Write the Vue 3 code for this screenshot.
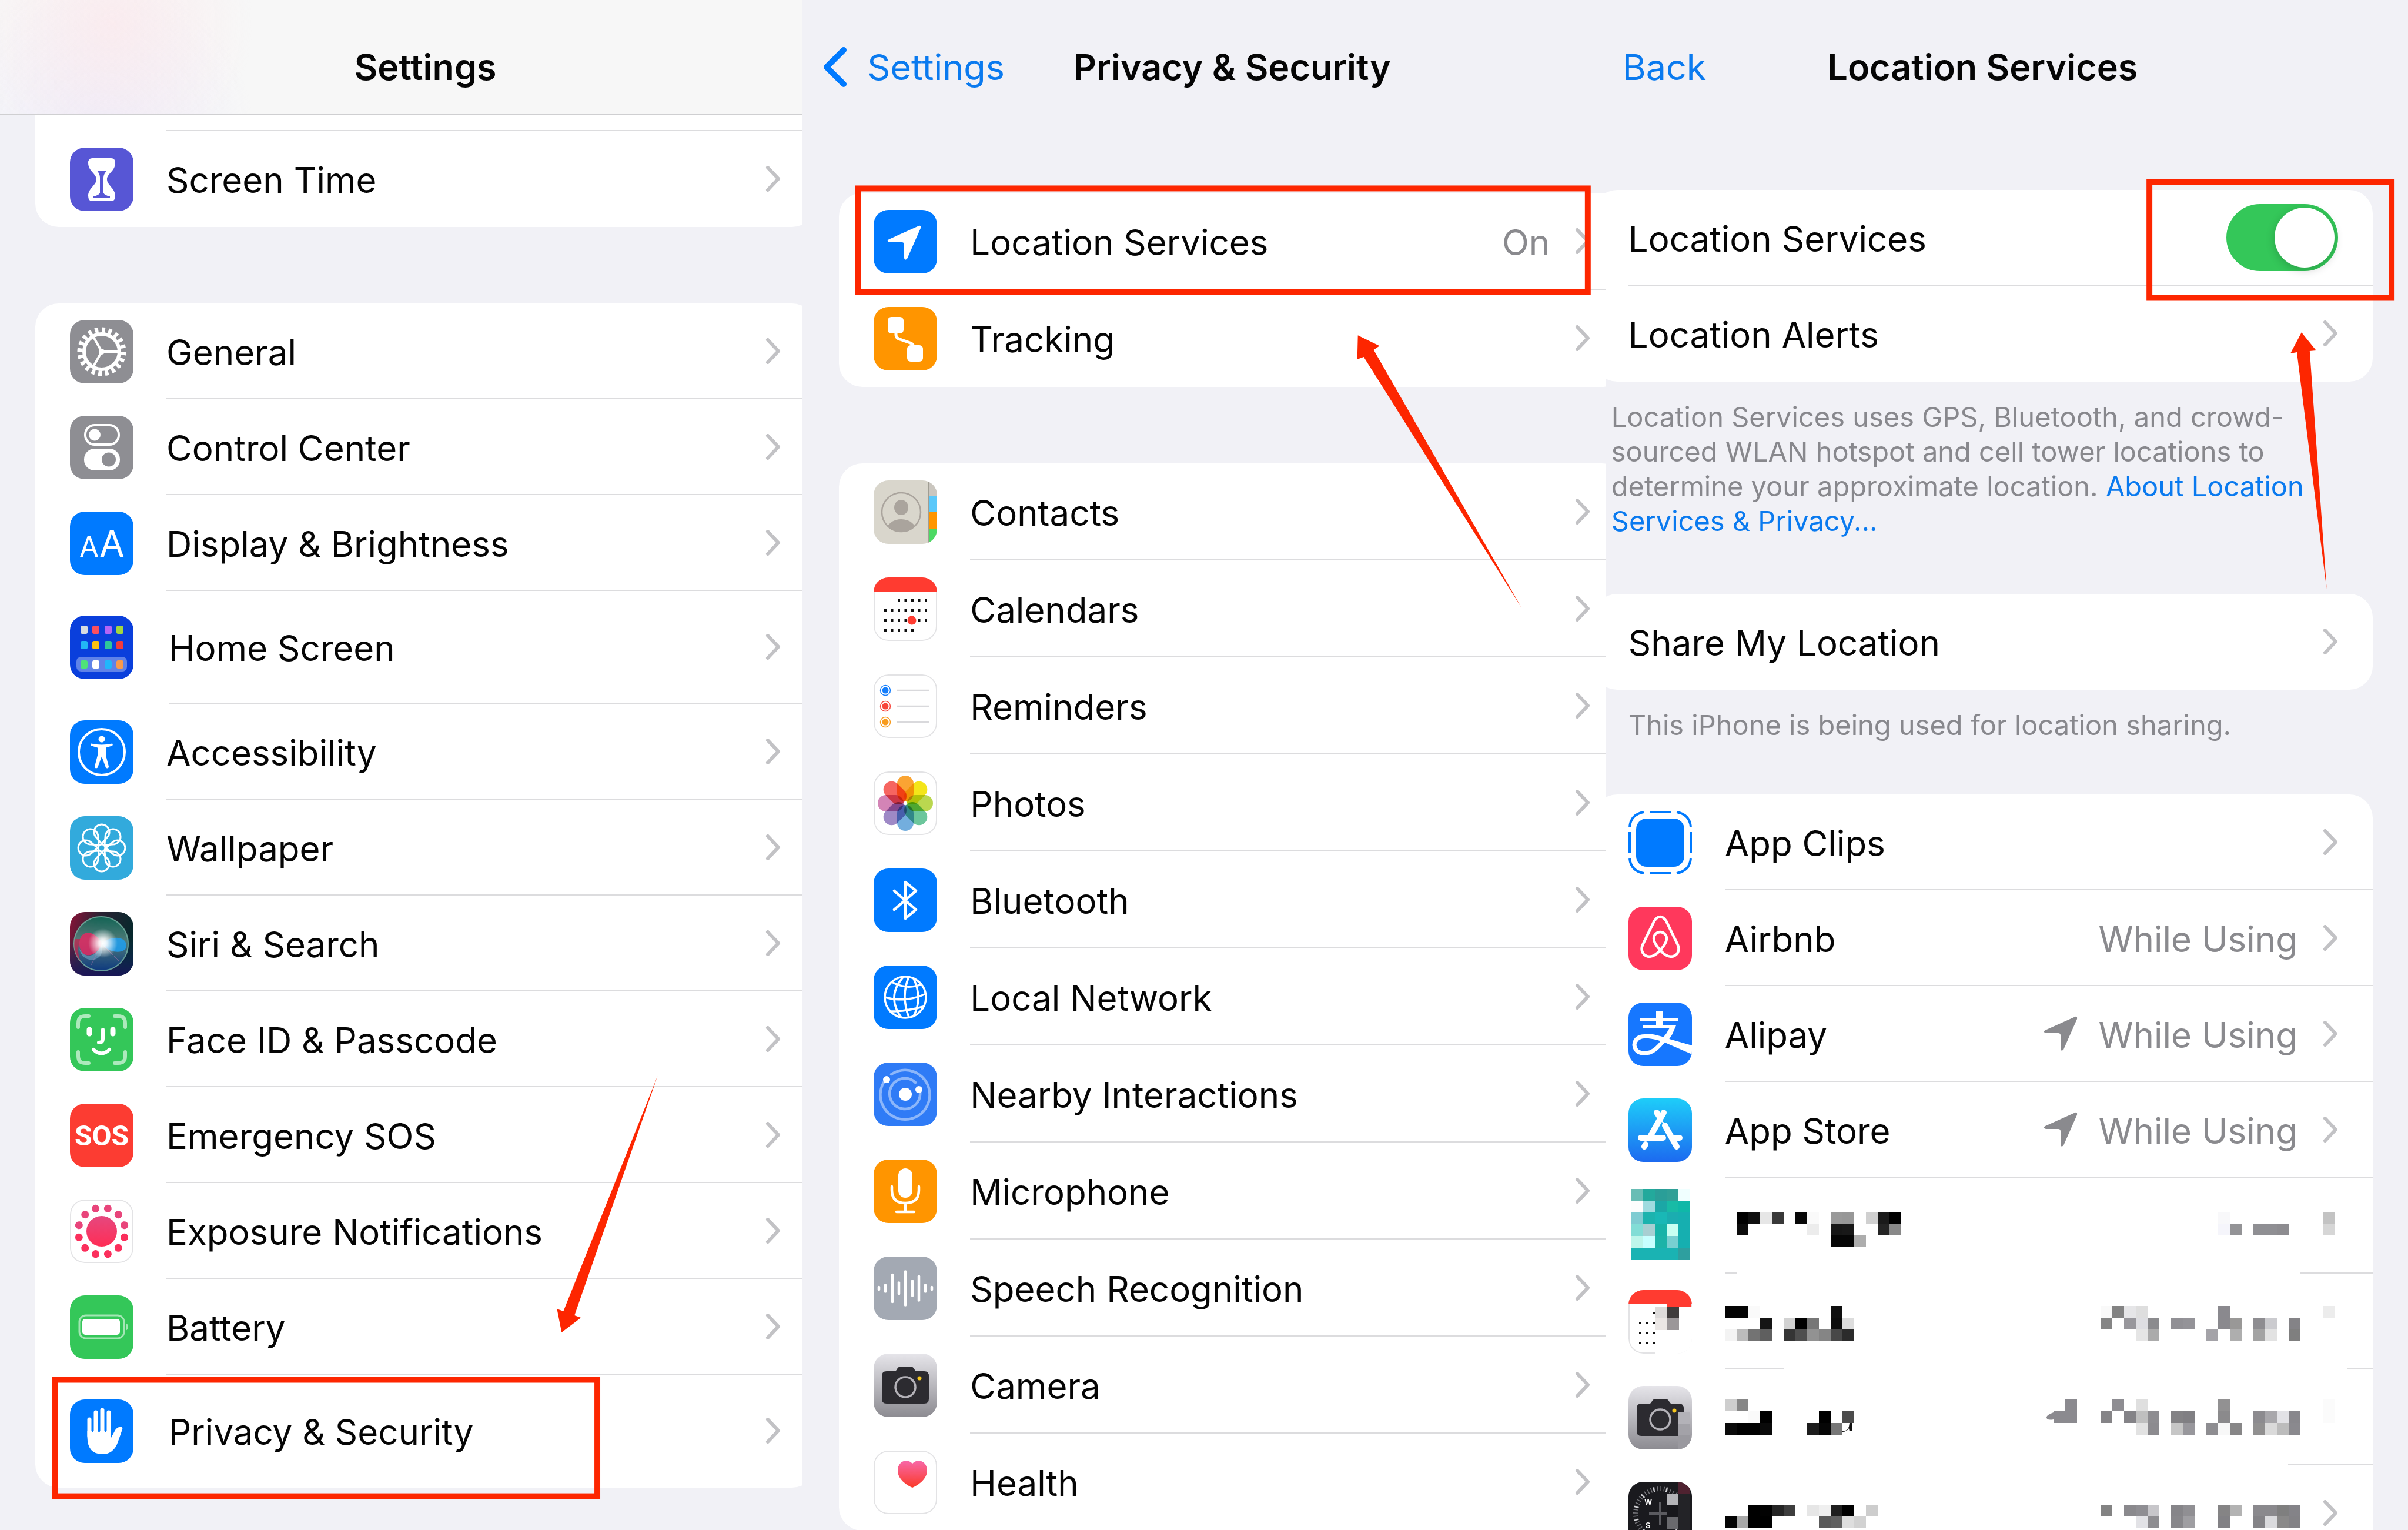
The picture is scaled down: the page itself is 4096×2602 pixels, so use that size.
<template>
  <main class="board">
    <section v-for="panel in panels" :key="panel.id" class="panel" :class="panel.id">
      <div class="screen">
        <header class="navbar">
          <div class="nav-side">
            <a v-if="panel.back" href="#" class="back">
              <svg v-if="panel.backIcon" class="back-icon" viewBox="0 0 43 70">
                <path d="M37 6 8 35l29 29" />
              </svg>
              <span>{{ panel.back }}</span>
            </a>
          </div>
          <h1>{{ panel.title }}</h1>
          <div class="nav-side"></div>
        </header>

        <template v-for="(block, i) in panel.blocks" :key="i">
          <p v-if="block.note" class="note" :class="block.kind">
            {{ block.note }} <a v-if="block.link" href="#">{{ block.link }}</a>
          </p>
          <ul v-else class="card" :class="block.kind">
            <li v-if="block.kind === 'cut'" class="row stub"><div class="body"></div></li>
            <li v-for="row in block.rows" :key="row.icon + row.label" class="row" :class="[row.kind, { plain: !row.icon }]">
              <svg v-if="row.icon" class="icon" :class="row.icon" viewBox="0 0 108 108" v-html="icons[row.icon]"></svg>
              <div class="body">
                <label v-if="row.toggle" class="label" for="location-switch">{{ row.label }}</label>
                <span v-else-if="row.label" class="label">{{ row.label }}</span>
                <svg v-if="row.blocks" class="blocks" viewBox="0 0 300 60">
                  <rect v-for="(c, n) in cells(row.blocks)" :key="n" :x="c.x" :y="c.y" width="20" height="20" :fill="c.fill" />
                  <path v-if="row.kind === 'line-b'" d="M200 54q9 0 11-8l1-6h4v14h-4l-1-5q-4 6-11 6z" fill="#111" />
                </svg>
                <span class="spacer"></span>
                <input v-if="row.toggle" id="location-switch" v-model="locationOn" type="checkbox" class="switch" />
                <svg v-if="row.arrow" class="arrow" viewBox="22 26 60 60">
                  <path :d="arrowShape" />
                </svg>
                <svg v-if="row.arrowBlocks" class="arrow-blocks" viewBox="0 0 52 60">
                  <path d="M12 20h20V0h20v40H12v-6q-12 2-12-4 1-4 12-8z" fill="#8b8a8f" />
                </svg>
                <span v-if="row.value" class="value">{{ row.value }}</span>
                <svg v-if="row.valueBlocks" class="value-blocks" viewBox="0 0 340 60">
                  <rect v-for="(c, n) in cells(row.valueBlocks)" :key="n" :x="c.x" :y="c.y" width="20" height="20" :fill="c.fill" />
                </svg>
                <svg v-if="row.endBlocks" class="end-blocks" viewBox="0 0 26 60">
                  <rect v-for="(c, n) in cells(row.endBlocks)" :key="n" :x="c.x" :y="c.y" width="20" height="20" :fill="c.fill" />
                </svg>
                <svg v-else-if="!row.toggle" class="chevron" viewBox="0 0 26 44">
                  <path d="M4 3l18 19L4 41" />
                </svg>
              </div>
            </li>
          </ul>
        </template>
      </div>
    </section>

    <!-- red boxes and pointers drawn over the three screens -->
    <svg class="marks" viewBox="0 0 4116 2615">
      <g class="boxes">
        <rect x="94" y="2358" width="927" height="199" />
        <rect x="1467" y="322" width="1247" height="177" />
        <rect x="3674" y="311" width="414" height="198" />
      </g>
      <g class="pointers">
        <path d="M1124 1839 963 2241l-11-4 8 40 33-25-11-4z" />
        <path d="M2601 1039 2331 610l-11 4 1-41 37 18-10 7z" />
        <path d="M3977 1007 3926 602l-11 2 19-36 25 31-11 1z" />
      </g>
    </svg>
  </main>
</template>

<script setup>
import { ref } from 'vue'

const locationOn = ref(true)

const arrowShape = 'M77 27 26 50q-5 3 1 5h21q4 0 4 4v23q1 5 5 1L80 31q1-5-3-4z'

// each entry is [row, column, colour] on a 20px grid
function cells(list) {
  return list.map(([r, c, fill]) => ({ x: c * 20, y: r * 20, fill }))
}

const panels = [
  {
    id: 'settings',
    title: 'Settings',
    blocks: [
      { kind: 'cut', rows: [{ icon: 'hourglass', label: 'Screen Time' }] },
      {
        rows: [
          { icon: 'gear', label: 'General' },
          { icon: 'control', label: 'Control Center' },
          { icon: 'display', label: 'Display & Brightness' },
          { icon: 'home', label: 'Home Screen', kind: 'tall' },
          { icon: 'access', label: 'Accessibility' },
          { icon: 'wallpaper', label: 'Wallpaper' },
          { icon: 'siri', label: 'Siri & Search' },
          { icon: 'faceid', label: 'Face ID & Passcode' },
          { icon: 'sos', label: 'Emergency SOS' },
          { icon: 'exposure', label: 'Exposure Notifications' },
          { icon: 'battery', label: 'Battery' },
          { icon: 'hand', label: 'Privacy & Security', kind: 'tall' }
        ]
      }
    ]
  },
  {
    id: 'privacy',
    title: 'Privacy & Security',
    back: 'Settings',
    backIcon: true,
    blocks: [
      {
        rows: [
          { icon: 'location', label: 'Location Services', value: 'On' },
          { icon: 'tracking', label: 'Tracking' }
        ]
      },
      {
        rows: [
          { icon: 'contacts', label: 'Contacts' },
          { icon: 'calendar', label: 'Calendars' },
          { icon: 'reminders', label: 'Reminders' },
          { icon: 'photos', label: 'Photos' },
          { icon: 'bluetooth', label: 'Bluetooth' },
          { icon: 'network', label: 'Local Network' },
          { icon: 'nearby', label: 'Nearby Interactions' },
          { icon: 'mic', label: 'Microphone' },
          { icon: 'speech', label: 'Speech Recognition' },
          { icon: 'camera', label: 'Camera' },
          { icon: 'health', label: 'Health' }
        ]
      }
    ]
  },
  {
    id: 'location-services',
    title: 'Location Services',
    back: 'Back',
    blocks: [
      {
        rows: [
          { label: 'Location Services', toggle: true },
          { label: 'Location Alerts' }
        ]
      },
      {
        kind: 'wide',
        note: 'Location Services uses GPS, Bluetooth, and crowd-sourced WLAN hotspot and cell tower locations to determine your approximate location.',
        link: 'About Location Services & Privacy...'
      },
      { rows: [{ label: 'Share My Location' }] },
      { kind: 'short', note: 'This iPhone is being used for location sharing.' },
      {
        rows: [
          { icon: 'clips', label: 'App Clips' },
          { icon: 'airbnb', label: 'Airbnb', value: 'While Using' },
          { icon: 'alipay', label: 'Alipay', value: 'While Using', arrow: true },
          { icon: 'appstore', label: 'App Store', value: 'While Using', arrow: true },
          {
            icon: 'teal',
            kind: 'line-a',
            blocks: [
              [0, 1, '#000'], [0, 2, '#0f0f0f'], [0, 3, '#e6e6e6'], [0, 4, '#383838'], [0, 6, '#080808'],
              [0, 7, '#fafafa'], [0, 9, '#999'], [0, 10, '#979797'], [0, 12, '#d0d0d0'], [0, 13, '#1a1a1a'], [0, 14, '#000'],
              [1, 1, '#0c0c0c'], [1, 7, '#ececec'], [1, 9, '#161616'], [1, 10, '#181818'], [1, 13, '#242424'], [1, 14, '#888'],
              [2, 9, '#060606'], [2, 10, '#060606'], [2, 11, '#adadad']
            ],
            valueBlocks: [
              [0, 10, '#f8f8fa'], [1, 10, '#f5f5fb'], [1, 11, '#939396'], [1, 13, '#8f8f93'], [1, 14, '#8f8f93'], [1, 15, '#8d8c90']
            ],
            endBlocks: [[0, 0, '#c3c3c3'], [1, 0, '#d6d6d6']]
          },
          {
            icon: 'calendarCut',
            kind: 'line-mid',
            blocks: [
              [0, 0, '#040404'], [0, 1, '#040404'], [0, 2, '#fafafa'], [0, 9, '#0f0f0f'],
              [1, 3, '#151515'], [1, 5, '#d2d2d2'], [1, 6, '#000'], [1, 7, '#777'], [1, 9, '#0c0c0c'], [1, 10, '#ddd'],
              [2, 0, '#f3f3f3'], [2, 1, '#bbb'], [2, 2, '#737373'], [2, 3, '#5f5f5f'], [2, 5, '#353535'], [2, 6, '#4f4f4f'],
              [2, 7, '#929292'], [2, 8, '#858585'], [2, 9, '#484848'], [2, 10, '#2b2b2b']
            ],
            valueBlocks: [
              [0, 0, '#f9f9f9'], [0, 1, '#838383'], [0, 2, '#e6e6e8'], [0, 3, '#dedede'], [0, 10, '#8a898e'],
              [1, 0, '#858585'], [1, 2, '#98979c'], [1, 3, '#dedee2'], [1, 4, '#8b8b8e'], [1, 6, '#919095'], [1, 7, '#949398'],
              [1, 10, '#8a898e'], [1, 11, '#999897'], [1, 13, '#8e8d91'], [1, 14, '#cbcbcf'], [1, 16, '#848387'],
              [2, 3, '#e5e5e5'], [2, 4, '#ababab'], [2, 9, '#a4a3a8'], [2, 11, '#aeaeae'], [2, 13, '#a3a3a3'], [2, 14, '#e2e2e2'], [2, 16, '#7f7f7f']
            ],
            endBlocks: [[0, 0, '#ececec']]
          },
          {
            icon: 'cameraCut',
            kind: 'line-b',
            arrowBlocks: true,
            blocks: [
              [0, 0, '#cecece'], [0, 1, '#878787'],
              [1, 2, '#fafafa'], [1, 3, '#000'], [1, 8, '#000'], [1, 10, '#4c4c4c'],
              [2, 0, '#0a0a0a'], [2, 1, '#000'], [2, 2, '#000'], [2, 3, '#0a0a0a'], [2, 7, '#1d1d1d'], [2, 8, '#060606'], [2, 9, '#777']
            ],
            valueBlocks: [
              [0, 1, '#8e8d92'], [0, 3, '#dfdfdf'], [0, 10, '#929192'],
              [1, 0, '#858487'], [1, 2, '#848387'], [1, 3, '#bfbfbf'], [1, 4, '#8e8d91'], [1, 6, '#838285'], [1, 7, '#807f83'],
              [1, 10, '#8b8a8c'], [1, 13, '#8c8b8f'], [1, 14, '#a8a7ab'], [1, 15, '#e2e2e6'], [1, 16, '#88878c'],
              [2, 3, '#e2e2e2'], [2, 4, '#8c8b8f'], [2, 6, '#c6c6c6'], [2, 7, '#98979c'], [2, 9, '#8e8d91'], [2, 10, '#f8f8f8'],
              [2, 11, '#878687'], [2, 13, '#919090'], [2, 14, '#dadada'], [2, 15, '#bcbcbc'], [2, 16, '#8a898e']
            ],
            endBlocks: [[0, 0, '#fbfbfb'], [1, 0, '#fbfbfb']]
          },
          {
            icon: 'compass',
            kind: 'low',
            blocks: [
              [0, 2, '#000'], [0, 3, '#020202'], [0, 4, '#252525'], [0, 5, '#3d3d3d'], [0, 7, '#e6e6e6'], [0, 8, '#efefef'],
              [0, 9, '#1e1e1e'], [0, 10, '#000'], [0, 12, '#cdcdcd'],
              [1, 0, '#040404'], [1, 1, '#a8a8a8'], [1, 2, '#000'], [1, 3, '#000'], [1, 8, '#5a5a5a'], [1, 9, '#606060'],
              [1, 10, '#dedede'], [1, 11, '#d2d2d2']
            ],
            valueBlocks: [
              [0, 0, '#838383'], [0, 2, '#8a898d'], [0, 3, '#8f8e93'], [0, 4, '#c7c6ca'], [0, 6, '#868589'], [0, 7, '#908f93'],
              [0, 10, '#858485'], [0, 11, '#b3b3b3'], [0, 13, '#8a898d'], [0, 14, '#8a898d'], [0, 15, '#7f7f7f'], [0, 16, '#848388'],
              [1, 3, '#e2e2e6'], [1, 4, '#8e8d91'], [1, 6, '#88878b'], [1, 7, '#9f9ea2'], [1, 10, '#828185'], [1, 13, '#848387'],
              [1, 14, '#dadadd'], [1, 15, '#8a8989'], [1, 16, '#838286']
            ]
          }
        ]
      }
    ]
  }
]

const around = (count, draw, start = 0) =>
  Array.from({ length: count }, (_, k) => draw(start + (k * 360) / count, k)).join('')

const bg = (fill) => `<rect width="108" height="108" fill="${fill}"/>`
const whiteBg = '<rect x="1" y="1" width="106" height="106" rx="24" fill="#fff" stroke="#e3e3e5" stroke-width="2"/>'
const line = (width, inner, extra = '') =>
  `<g fill="none" stroke="#fff" stroke-width="${width}" stroke-linecap="round" stroke-linejoin="round" ${extra}>${inner}</g>`

const squares = (colors, y) =>
  colors.map((c, k) => `<rect x="${[18, 38, 59, 79][k]}" y="${y}" width="12" height="14" rx="3" fill="${c}"/>`).join('')

const dotRow = (columns, y) =>
  columns.map((c) => `<rect x="${18 + c * 11.5}" y="${y - 2}" width="4" height="4" fill="#111"/>`).join('')

const tile = (x, y, fill, h = 20) => `<rect x="${x}" y="${y}" width="20" height="${h}" fill="${fill}"/>`

const petals = ['#fa9a1c', '#f3e200', '#b3d33c', '#5cc091', '#64a5db', '#937cc0', '#ce76ae', '#f5544f']
const bars = [[9, 4], [20, 11], [32, 46], [43, 19], [54, 57], [66, 25], [77, 41], [88, 11], [99, 4]]

const tealTiles = [
  ['#69bdb5', '#23a99c', '#2a9e98', '#30a097', '#f0ffff'],
  ['#fcfdfd', '#9edbdf', '#1ba7a6', '#18bba6', '#0fb8a8'],
  ['#7fccd2', '#1bb3ae', '#19b8b6', '#1badb0', '#16afb0'],
  ['#82ddd6', '#a8cfd2', '#18b3a8', '#c9fff2', '#16afb0'],
  ['#bdf5ea', '#c8ffff', '#1cb3a8', '#78cfd1', '#16afb0'],
  ['#1ab3b3', '#1ab3b3', '#1ab3b3', '#1ab3b3', '#2e9f9f']
]

const cameraArt = (id) =>
  `<defs><linearGradient id="${id}" x2="0" y2="1"><stop stop-color="#e6e5ea"/><stop offset="1" stop-color="#8c8b91"/></linearGradient></defs>` +
  bg(`url(#${id})`) +
  '<path d="M22 30h14q2 0 4-4 2-4 7-4h15q5 0 7 4 2 4 4 4h13q8 0 8 8v39q0 8-8 8H22q-8 0-8-8V38q0-8 8-8z" fill="#2c2b30"/>' +
  '<circle cx="54" cy="57" r="17" fill="#2c2b30" stroke="#b4b2b8" stroke-width="3.5"/>' +
  '<circle cx="78" cy="42" r="3.5" fill="#f7c81e"/>'

const icons = {
  hourglass:
    bg('#5756d5') +
    '<path d="M38 18h32q7 0 7 8c0 14-14 18-14 28s14 15 14 28q0 9-7 9H38q-7 0-7-9c0-13 14-18 14-28S31 40 31 26q0-8 7-8z" fill="#fff"/>' +
    '<path d="M46 39h17q-6 6-6 12v26q2 4 11 6v2H40v-2q9-2 11-6V51q0-6-5-12z" fill="#5756d5"/>',
  gear:
    bg('#8e8e93') +
    '<circle cx="54" cy="54" r="37" fill="none" stroke="#fff" stroke-width="9" pathLength="40" stroke-dasharray="1 1"/>' +
    '<circle cx="54" cy="54" r="30" fill="none" stroke="#fff" stroke-width="6"/>' +
    line(4, '<path d="M54 54h28M54 54 40 29M54 54 40 79"/>') +
    '<circle cx="54" cy="54" r="5" fill="#fff"/>',
  control:
    bg('#8e8e93') +
    '<rect x="26" y="16" width="57" height="33" rx="16" fill="none" stroke="#fff" stroke-width="4"/>' +
    '<circle cx="42" cy="32.5" r="10" fill="#fff"/>' +
    '<rect x="24" y="56" width="61" height="37" rx="18" fill="#fff"/><circle cx="66" cy="74.5" r="12" fill="#8e8e93"/>',
  display: bg('#007aff') + '<text x="16" y="77" class="glyph-a">A</text><text x="50" y="77" class="glyph-b">A</text>',
  home:
    bg('#0a3fdc') +
    squares(['#d8dbe0', '#fb4f60', '#b464f6', '#a4d63f'], 17) +
    squares(['#22b8f5', '#f9c012', '#2fc79a', '#f13b3c'], 43) +
    '<rect x="11" y="70" width="86" height="25" rx="8" fill="#fff" opacity=".35"/>' +
    squares(['#4fe27a', '#fff', '#20b6fb', '#f99a4c'], 76),
  access:
    bg('#007aff') +
    '<circle cx="54" cy="54" r="39" fill="none" stroke="#fff" stroke-width="4"/><circle cx="54" cy="32" r="5.5" fill="#fff"/>' +
    '<path d="M36 39.5q-2 3 1 4l10 3v13l-5 19q0 3 3 3l2-1 7-19 7 19 2 1q3 0 3-3l-5-19v-13l10-3q3-1 1-4-10 2-18 2t-18-2z" fill="#fff"/>',
  wallpaper:
    bg('#32aadc') +
    line(3, around(8, (a) => `<path d="M54 47 43 34a13 13 0 1 1 22 0z" transform="rotate(${a} 54 54)"/>`) + '<circle cx="54" cy="54" r="6"/>'),
  siri:
    '<defs><linearGradient id="siri-bg" x2="1" y2=".3"><stop stop-color="#8d1238"/><stop offset=".45" stop-color="#2a2233"/><stop offset="1" stop-color="#06282c"/></linearGradient>' +
    '<linearGradient id="siri-low" x2="0" y2="1"><stop offset=".4" stop-color="#083a6a" stop-opacity="0"/><stop offset="1" stop-color="#1b1260" stop-opacity=".8"/></linearGradient>' +
    '<linearGradient id="siri-orb" x2="0" y2="1"><stop stop-color="#0f6f5a"/><stop offset=".45" stop-color="#5c8a86"/><stop offset="1" stop-color="#0c3f86"/></linearGradient>' +
    '<radialGradient id="siri-glow"><stop stop-color="#fff"/><stop offset=".25" stop-color="#fff" stop-opacity=".9"/><stop offset="1" stop-color="#fff" stop-opacity="0"/></radialGradient></defs>' +
    bg('url(#siri-bg)') + bg('url(#siri-low)') +
    '<circle cx="53" cy="54" r="46" fill="url(#siri-orb)" opacity=".85"/><circle cx="53" cy="54" r="46" fill="none" stroke="#7bb8a8" stroke-width="2" opacity=".8"/>' +
    '<path d="M8 46a46 46 0 0 0 10 38q-8-20 0-38z" fill="#c81f4c" opacity=".7"/>' +
    '<path d="M54 54C44 30 16 28 16 54s28 26 38 0z" fill="#e22862" opacity=".85"/><path d="M54 54c8 34-34 36-38 8 10 20 30 14 38-8z" fill="#7db6d6" opacity=".5"/>' +
    '<path d="M54 54c14-14 40-14 42 2S66 72 54 54z" fill="#1f9ff0" opacity=".85"/>' +
    '<path d="M54 54 36 90M54 54l30 30" stroke="#b778b0" opacity=".5"/><circle cx="56" cy="53" r="25" fill="url(#siri-glow)"/>',
  faceid:
    bg('#34c759') +
    line(6, '<path d="M14 33v-7q0-12 12-12h6M76 14h6q12 0 12 12v7M94 75v7q0 12-12 12h-6M32 94h-6q-12 0-12-12v-7"/>', 'opacity=".6"') +
    line(9, '<path d="M33 37v7M73 37v7"/>') +
    line(6, '<path d="M56 37v16q0 6-7 6M40 71q14 13 27 0"/>'),
  sos: bg('#fc3c32') + '<text x="54" y="71" text-anchor="middle" class="glyph-sos">SOS</text>',
  exposure:
    whiteBg +
    '<defs><linearGradient id="expo" x2="0" y2="1"><stop stop-color="#e5487f"/><stop offset="1" stop-color="#ff2d55"/></linearGradient></defs>' +
    '<circle cx="54" cy="54" r="26" fill="url(#expo)"/>' +
    around(12, (a) => `<circle cx="54" cy="14" r="6.5" fill="${a > 90 && a < 270 ? '#fb2f5c' : '#e8457b'}" transform="rotate(${a} 54 54)"/>`, 15),
  battery:
    bg('#34c759') +
    '<rect x="16" y="34" width="76" height="39" rx="11" fill="none" stroke="#fff" stroke-width="3" opacity=".55"/>' +
    '<rect x="21" y="40" width="64" height="27" rx="5" fill="#fff"/><path d="M95 47q4 2 4 6.5T95 60z" fill="#fff" opacity=".55"/>',
  hand:
    bg('#007aff') +
    line(7, '<path d="M33 34v28M44 22v38M55 18v42M66 22v38"/>') +
    '<path d="M29.5 54H69.500V66L77 52q4-6 11-5 2 1 1 4L82 71Q75 93 55 93 30 93 29.5 64z" fill="#fff"/>' +
    '<path d="M38.5 32v22M49.5 28v26M60.5 28v26" stroke="#007aff" stroke-width="3" stroke-linecap="round"/>',
  location: bg('#007aff') + `<path d="${arrowShape}" fill="#fff"/>`,
  tracking:
    bg('#ff9500') +
    '<rect x="24" y="17" width="27" height="28" rx="6" fill="#fff"/><rect x="57" y="65" width="27" height="28" rx="6" fill="#fff"/>' +
    line(5, '<path d="M38 44v3q0 6 7 8l17 6q6 2 6 8"/>'),
  contacts:
    bg('#d9d6cc') +
    '<rect x="94" width="14" height="27" fill="#cac6bf"/><rect x="94" y="27" width="14" height="27" fill="#5ac8fa"/><rect x="94" y="54" width="14" height="28" fill="#ff9500"/><rect x="94" y="82" width="14" height="26" fill="#4cd964"/><path d="M94 0v108" stroke="#8d8a80" stroke-width="1.5"/>' +
    '<defs><clipPath id="person"><circle cx="47" cy="54" r="34"/></clipPath></defs><circle cx="47" cy="54" r="33" fill="none" stroke="#aaa49d" stroke-width="2.5"/>' +
    '<g clip-path="url(#person)" fill="#aaa49d"><ellipse cx="47" cy="46" rx="12" ry="13"/><ellipse cx="47" cy="87" rx="26" ry="21"/></g>',
  calendar:
    whiteBg + '<rect width="108" height="24" fill="#ff3b30"/>' +
    dotRow([2, 3, 4, 5, 6], 39) + dotRow([0, 1, 2, 3, 4, 5, 6], 56) + dotRow([0, 1, 2, 3, 5, 6], 73) + dotRow([0, 1, 2, 3, 4], 90) +
    '<circle cx="65" cy="73" r="7.5" fill="#ff3b30"/>',
  reminders:
    whiteBg +
    [['#157efb', 27], ['#f7453b', 54], ['#f89b1c', 81]]
      .map(([c, y]) => `<circle cx="20" cy="${y}" r="8.5" fill="none" stroke="${c}" stroke-width="1.5"/><circle cx="20" cy="${y}" r="5.5" fill="${c}"/><path d="M40 ${y}h54" stroke="#d9d9dc" stroke-width="2.5"/>`)
      .join(''),
  photos:
    whiteBg +
    `<g class="petals">${around(8, (a, k) => `<rect x="40" y="7" width="28" height="44" rx="14" fill="${petals[k]}" transform="rotate(${a} 54 54)"/>`)}</g>`,
  bluetooth: bg('#007aff') + line(4.5, '<path d="M35 38l37 32-18 15V23l18 15-37 32"/>'),
  network:
    bg('#007aff') +
    line(3.5, '<circle cx="54" cy="54" r="35"/><path d="M60 19Q46 52 60 88M50 20Q22 52 46 87M68 22Q84 56 68 86M31 28q25 14 50 4M19 54q36 10 70-6M28 78q28 0 56-8"/>'),
  nearby:
    bg('#2f7bf6') +
    line(4.5, '<path d="M30 20a42 42 0 1 1-13 14M71 34a26 26 0 1 0 8 16"/>', 'opacity=".45"') +
    '<g fill="#fff"><circle cx="54" cy="54" r="11"/><circle cx="22" cy="29" r="6"/><circle cx="77" cy="46" r="6"/></g>',
  mic:
    bg('#ff9500') +
    '<rect x="42" y="15" width="24" height="50" rx="12" fill="#fff"/>' +
    line(4.5, '<path d="M31 46v6q0 22 23 22t23-22v-6M54 74v15M39 89h30"/>'),
  speech: bg('#a3a9b3') + line(4.5, bars.map(([x, h]) => `<path d="M${x} ${54 - h / 2}v${h}"/>`).join('')),
  camera: cameraArt('cam-a'),
  health:
    whiteBg +
    '<defs><linearGradient id="heart" x2="0" y2="1"><stop stop-color="#f868a8"/><stop offset="1" stop-color="#fb3a28"/></linearGradient></defs>' +
    '<path d="M66 22C58 13 41 17 41 34c0 14 14 24 25 29 11-5 25-15 25-29 0-17-17-21-25-12z" fill="url(#heart)"/>',
  clips:
    '<rect x="13" y="13" width="82" height="82" rx="18" fill="#007aff"/>' +
    '<path d="M36 2h36M36 106h36M2 36v36M106 36v36M2 27Q4 6 26 2M82 2q22 4 24 25M106 81q-2 21-24 25M26 106Q4 102 2 81" fill="none" stroke="#007aff" stroke-width="4"/>',
  airbnb:
    bg('#ff385c') +
    line(4.5, '<path d="M54 74c-8-9-11-15-11-20a11 11 0 0 1 22 0c0 5-3 11-11 20-9 10-18 13-25 9-6-3-8-11-5-18l20-41q10-14 20 0l20 41c3 7 1 15-5 18-7 4-16 1-25-9z"/>'),
  alipay:
    bg('#1677ff') +
    '<path d="M20 27h27V14h12v13h26v4H59v8h22l-7 16-8 12H56l14-24H24v-4h23v-8H20z" fill="#fff"/>' +
    '<path d="M66 56Q50 80 36 85 12 90 10 72 12 50 52 61" fill="none" stroke="#fff" stroke-width="7"/>' +
    '<path d="M32 53q12 0 34 8l42 12v15L62 68 32 58z" fill="#fff"/>',
  appstore:
    '<defs><linearGradient id="store" x2="0" y2="1"><stop stop-color="#1ecdf9"/><stop offset="1" stop-color="#1c6af0"/></linearGradient></defs>' +
    bg('url(#store)') +
    line(10, '<path d="M48 24l4 6M60 24 38 63M29 78l-2 4M62 46l20 36M21 67h38M78 67h9"/>') +
    '<path d="M56 38l8 5 18 30-6 5z" fill="#fff"/>',
  teal: tealTiles.map((r, y) => r.map((c, x) => tile(5 + x * 20, y * 20 - 9, c)).join('')).join(''),
  calendarCut:
    whiteBg + '<rect width="108" height="24" fill="#ff3b30"/><path d="M66 23h40v5H66z" fill="#ff3b30"/>' +
    dotRow([2], 39) + dotRow([0, 1, 2], 56) + dotRow([0, 1, 2], 73) + dotRow([0, 1, 2], 90) +
    '<path d="M46 84h62v24H46zM85 28h23v80H85z" fill="#fff"/>' +
    tile(46, 28, '#dddbda') + tile(46, 48, '#ebe7e5') + tile(66, 28, '#3f3c3c') + tile(66, 48, '#9b9799'),
  cameraCut: cameraArt('cam-b') + tile(85, 44, '#b3b2b8') + tile(85, 64, '#a3a2a8') + tile(85, 84, '#9a999f', 24),
  compass:
    bg('#1a1a1e') +
    '<circle cx="54" cy="54" r="42" fill="none" stroke="#77777c" stroke-width="8" stroke-dasharray="1.5 4"/>' +
    around(12, (a) => `<path d="M54 8v8" stroke="#d5d5d8" stroke-width="2" transform="rotate(${a} 54 54)"/>`, 15) +
    '<path d="M35 54h36M54 34v40" stroke="#5b5b60" stroke-width="4"/>' +
    '<text x="27" y="39" class="glyph-c">W</text><text x="29" y="79" class="glyph-c">S</text>' +
    tile(85, 0, '#4f2230') + tile(85, 20, '#232327', 88) + tile(65, 20, '#b4b4b8') + tile(65, 40, '#17171b') + tile(65, 60, '#6a6a6e')
}
</script>

<style>
body {
  margin: 0;
}

/* artwork inside the icons */
.glyph-a,
.glyph-b,
.glyph-c,
.glyph-sos {
  fill: #fff;
  font-family: Inter, sans-serif;
}
.glyph-a {
  font-size: 48px;
}
.glyph-b {
  font-size: 62px;
}
.glyph-c {
  font-size: 13px;
  font-weight: 600;
}
.glyph-sos {
  font-family: Roboto, sans-serif;
  font-size: 48px;
  font-weight: 700;
}
.petals rect {
  mix-blend-mode: multiply;
  opacity: 0.9;
}
</style>

<style scoped>
.board {
  position: relative;
  display: grid;
  grid-template-columns: repeat(3, 1fr);
  height: 100vh;
  overflow: hidden;
  background: #f1f1f6;
  color: #050505;
  font-family: Inter, 'Noto Sans', sans-serif;
  font-size: 60px;
  line-height: 80px;
}

.panel {
  display: flex;
  min-width: 0;
  overflow: hidden;
}

/* each phone screen is a little wider than the column that crops it */
.screen {
  flex: none;
  width: 106%;
}
.privacy .screen {
  width: 107%;
}
.location-services {
  justify-content: flex-end;
}

.navbar {
  box-sizing: border-box;
  display: grid;
  grid-template-columns: 1fr auto 1fr;
  height: 196px;
  padding-top: 74px;
}
.settings .navbar {
  border-bottom: 2px solid #cfcfd1;
  background:
    radial-gradient(circle at 190px 40px, rgba(252, 232, 235, 0.7), transparent 240px),
    radial-gradient(circle at 170px 220px, rgba(236, 235, 250, 0.9), transparent 260px),
    #f7f7f7;
}
.navbar h1 {
  margin: 0;
  font-size: 61px;
  font-weight: 600;
}
.back {
  display: inline-flex;
  align-items: center;
  gap: 34px;
  color: #0a7aef;
  font-size: 61px;
  text-decoration: none;
}
.privacy .back {
  padding-left: 33px;
}
.location-services .back {
  padding-left: 111px;
}
.back-icon {
  width: 43px;
  height: 70px;
  fill: none;
  stroke: #007aff;
  stroke-width: 10px;
  stroke-linecap: round;
  stroke-linejoin: round;
}

.card {
  margin: 0 60px 130px;
  padding: 0;
  overflow: hidden;
  border-radius: 40px;
  background: #fff;
  list-style: none;
}
.card.cut {
  border-top-left-radius: 0;
  border-top-right-radius: 0;
}
.privacy .card {
  margin-left: 62px;
  margin-right: 62px;
}
.privacy .navbar {
  margin-bottom: 132px;
}
.location-services .navbar {
  margin-bottom: 127px;
}
.location-services .card {
  margin-left: 62px;
  margin-bottom: 30px;
}

.row {
  display: flex;
  align-items: center;
  height: 163px;
  padding-left: 59px;
}
.privacy .row {
  height: 165px;
}
.row.tall {
  height: 192px;
}
.row.stub {
  height: 27px;
  padding-left: 167px;
}

.icon {
  flex: none;
  width: 108px;
  height: 108px;
  border-radius: 25px;
}
.icon.teal,
.icon.clips {
  border-radius: 0;
  overflow: visible;
}

.body {
  box-sizing: border-box;
  display: flex;
  flex: 1;
  align-items: center;
  height: 100%;
  margin-left: 56px;
  padding-right: 59px;
  border-bottom: 2px solid #dcdcde;
}
.row.plain .body {
  margin-left: 0;
}
.row.tall .body {
  margin-left: 60px;
}
.row:last-child .body {
  border-bottom-color: transparent;
}
.row.line-a .body {
  border-image: linear-gradient(to right, #dcdcde 22px, transparent 22px, transparent calc(100% - 126px), #dcdcde calc(100% - 126px)) 2;
}
.row.line-mid .body {
  border-image: linear-gradient(to right, #dcdcde 102px, transparent 102px, transparent calc(100% - 46px), #dcdcde calc(100% - 46px)) 2;
}
.row.line-b .body {
  border-image: linear-gradient(to right, transparent calc(100% - 146px), #dcdcde calc(100% - 146px)) 2;
}

.label {
  padding-top: 4px;
  white-space: nowrap;
}
.spacer {
  flex: 1;
}
.value {
  padding-top: 4px;
  margin-right: 43px;
  color: #8a8a8e;
  white-space: nowrap;
}
.chevron {
  width: 26px;
  height: 44px;
  fill: none;
  stroke: #c2c2c5;
  stroke-width: 6px;
  stroke-linecap: round;
  stroke-linejoin: round;
}
.arrow {
  width: 60px;
  height: 60px;
  margin-right: 34px;
  fill: #8a8a8e;
}

.blocks,
.value-blocks,
.end-blocks,
.arrow-blocks {
  height: 60px;
}
.line-a .body {
  padding-top: 14px;
}
.line-mid .body {
  padding-top: 8px;
}
.low .blocks,
.low .value-blocks {
  padding-top: 32px;
}
.blocks {
  width: 300px;
}
.value-blocks {
  width: 340px;
  margin-right: 38px;
}
.end-blocks {
  width: 26px;
}
.arrow-blocks {
  width: 52px;
  margin-right: 40px;
}

.switch {
  position: relative;
  width: 190px;
  height: 114px;
  margin: 0;
  border-radius: 57px;
  background: #d9d9dc;
  appearance: none;
}
.switch:checked {
  background: #34c759;
}
.switch::after {
  content: '';
  position: absolute;
  top: 6px;
  left: 6px;
  width: 102px;
  height: 102px;
  border-radius: 50%;
  background: #fff;
  box-shadow: 0 4px 16px rgba(0, 0, 0, 0.2);
}
.switch:checked::after {
  left: 82px;
}

.note {
  margin: 0;
  color: #88888d;
  font-size: 47px;
  line-height: 59px;
}
.note a {
  color: #0a7aef;
  text-decoration: none;
}
.note.wide {
  padding: 0 90px 95px 92px;
}
.note.short {
  padding: 0 60px 89px 121px;
}

.marks {
  position: absolute;
  top: 0;
  left: 0;
  width: 100%;
  pointer-events: none;
}
.boxes {
  fill: none;
  stroke: #fd2600;
  stroke-width: 10px;
}
.pointers {
  fill: #fd2600;
}
</style>
